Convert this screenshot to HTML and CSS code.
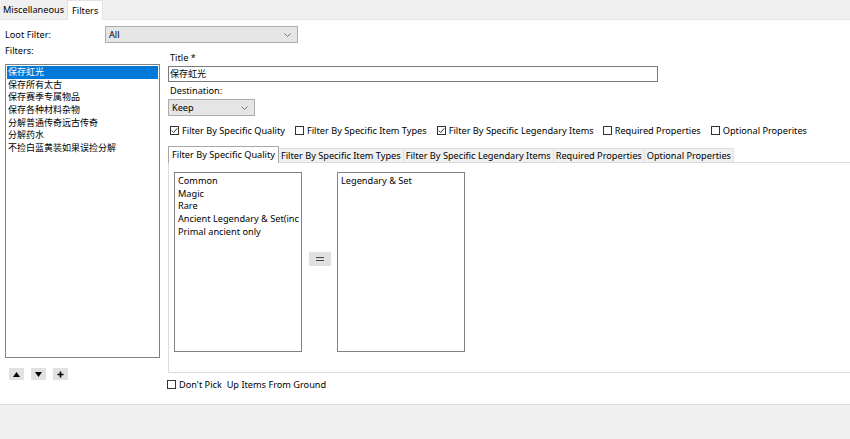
FILE: index.html
```html
<!DOCTYPE html>
<html>
<head>
<meta charset="utf-8">
<link rel="stylesheet" href="styles.css">
</head>
<body>
<div class="app">
  <div class="tabs">
    <div class="tab">Miscellaneous</div>
    <div class="tab active">Filters</div>
  </div>
  <div class="page">
    <div class="row-loot">
      <span class="lbl-loot">Loot Filter:</span>
      <div class="combo combo-all"><span>All</span><svg class="chev" width="7" height="4" viewBox="0 0 7 4"><polyline points="0.5,0.5 3.5,3.5 6.5,0.5" fill="none" stroke="#777" stroke-width="1"/></svg></div>
    </div>
    <div class="main">
      <div class="left">
        <div class="lbl">Filters:</div>
        <div class="listbox filters zh">
          <div class="item sel">保存虹光</div>
          <div class="item">保存所有太古</div>
          <div class="item">保存赛季专属物品</div>
          <div class="item">保存各种材料杂物</div>
          <div class="item">分解普通传奇远古传奇</div>
          <div class="item">分解药水</div>
          <div class="item">不捡白蓝黄装如果误捡分解</div>
        </div>
        <div class="btns">
          <div class="sbtn"><svg width="7" height="5" viewBox="0 0 7 5"><polygon points="3.5,0 7,5 0,5" fill="#000"/></svg></div>
          <div class="sbtn"><svg width="7" height="5" viewBox="0 0 7 5"><polygon points="0,0 7,0 3.5,5" fill="#000"/></svg></div>
          <div class="sbtn"><svg width="7" height="7" viewBox="0 0 7 7"><path d="M3.5 0.5V6.5M0.5 3.5H6.5" stroke="#000" stroke-width="1.6"/></svg></div>
        </div>
      </div>
      <div class="right">
        <div class="lbl">Title *</div>
        <div class="textbox zh">保存虹光</div>
        <div class="lbl lbl-dest">Destination:</div>
        <div class="combo combo-keep"><span>Keep</span><svg class="chev" width="7" height="4" viewBox="0 0 7 4"><polyline points="0.5,0.5 3.5,3.5 6.5,0.5" fill="none" stroke="#777" stroke-width="1"/></svg></div>
        <div class="checks">
          <label class="chk"><span class="box on"><svg width="7" height="7" viewBox="0 0 7 7"><polyline points="0.8,3.6 2.7,5.5 6.2,1.3" fill="none" stroke="#333" stroke-width="1"/></svg></span>Filter By Specific Quality</label>
          <label class="chk"><span class="box"></span>Filter By Specific Item Types</label>
          <label class="chk"><span class="box on"><svg width="7" height="7" viewBox="0 0 7 7"><polyline points="0.8,3.6 2.7,5.5 6.2,1.3" fill="none" stroke="#333" stroke-width="1"/></svg></span>Filter By Specific Legendary Items</label>
          <label class="chk"><span class="box"></span>Required Properties</label>
          <label class="chk"><span class="box"></span>Optional Properites</label>
        </div>
        <div class="subtabs">
          <div class="stab active">Filter By Specific Quality</div>
          <div class="stab">Filter By Specific Item Types</div>
          <div class="stab">Filter By Specific Legendary Items</div>
          <div class="stab">Required Properties</div>
          <div class="stab">Optional Properties</div>
        </div>
        <div class="panel">
          <div class="listbox qlist">
            <div class="item">Common</div>
            <div class="item">Magic</div>
            <div class="item">Rare</div>
            <div class="item">Ancient Legendary &amp; Set(incl</div>
            <div class="item">Primal ancient only</div>
          </div>
          <div class="swap"><svg width="8" height="4" viewBox="0 0 8 4"><rect x="0" y="0" width="8" height="1" fill="#444"/><rect x="0" y="3" width="8" height="1" fill="#444"/></svg></div>
          <div class="listbox qlist">
            <div class="item">Legendary &amp; Set</div>
          </div>
        </div>
        <label class="chk chk-ground"><span class="box"></span>Don't Pick&nbsp; Up Items From Ground</label>
      </div>
    </div>
  </div>
</div>
</body>
</html>
```
FILE: styles.css
```css
* { box-sizing: border-box; }
html, body { margin: 0; padding: 0; }
body {
  background: #f0f0f0;
  font-family: "Noto Sans", "Noto Sans CJK SC", sans-serif;
  font-size: 9.2px;
  color: #000;
  width: 850px;
  height: 439px;
  overflow: hidden;
}
.zh { font-size: 9px; }
.app { height: 439px; display: flex; flex-direction: column; }
.tabs { height: 19px; display: flex; align-items: flex-end; }
.tab {
  height: 17px;
  line-height: 16px;
  padding: 0 3px;
  color: #000;
}
.tab.active {
  height: 20px;
  line-height: 20px;
  background: #fff;
  border: 1px solid #e3e3e3;
  border-bottom: none;
  margin-bottom: -1px;
  position: relative;
  padding: 0 4px;
}
.page {
  height: 386px;
  background: #fff;
  border-top: 1px solid #e3e3e3;
  border-bottom: 1px solid #dcdcdc;
  padding: 6px 0 0 5px;
}
.row-loot { display: flex; align-items: center; height: 17px; }
.lbl-loot { width: 100px; }
.combo {
  display: flex;
  align-items: center;
  justify-content: space-between;
  background: #e5e5e5;
  border: 1px solid #adadad;
  height: 17px;
  padding: 0 6px 0 3px;
}
.combo-all { width: 193px; }
.combo-keep { width: 87px; margin-top: 2px; }
.main { display: flex; margin-top: 2px; }
.left { width: 155px; flex-shrink: 0; }
.lbl { line-height: 12px; height: 12px; }
.listbox {
  background: #fff;
  border: 1px solid #828282;
}
.filters { margin-top: 7px; height: 294px; padding: 1px 1px 0 1px; }
.item { line-height: 12.7px; height: 12.7px; padding-left: 1px; white-space: nowrap; overflow: hidden; }
.item.sel { background: #0078d7; color: #fff; }
.btns { display: flex; gap: 7px; margin-top: 10px; padding-left: 4px; }
.sbtn {
  width: 15px; height: 12px;
  background: #e1e1e1;
  border: 1px solid #e1e1e1;
  display: flex; align-items: center; justify-content: center;
}
.right { margin-left: 8px; padding-top: 7px; flex: 1; min-width: 0; }
.textbox {
  margin-top: 2px;
  width: 490px;
  height: 16px;
  border: 1px solid #7a7a7a;
  line-height: 14px;
  padding-left: 1px;
}
.lbl-dest { margin-top: 3px; padding-left: 2px; }
.right > .lbl:first-child { padding-left: 2px; }
.checks { display: flex; margin-top: 8px; height: 12px; align-items: center; padding-left: 2px; }
.chk { display: flex; align-items: center; margin-right: 10px; white-space: nowrap; }
.checks .chk:nth-child(3) { margin-right: 9px; }
.box {
  width: 9px; height: 9px;
  border: 1px solid #333;
  margin-right: 3px;
  display: flex; align-items: center; justify-content: center;
  background: #fff;
}
.subtabs { display: flex; margin-top: 10px; height: 16px; align-items: flex-end; }
.stab {
  height: 14px;
  line-height: 13px;
  padding: 0 2px;
  background: #f0f0f0;
  border: 1px solid #e0e0e0;
  border-bottom: none;
  margin-right: -1px;
  white-space: nowrap;
}
.stab.active {
  height: 17px;
  line-height: 15px;
  background: #fff;
  border: 1px solid #a8a8a8;
  border-bottom: none;
  margin-bottom: -1px;
  position: relative;
  padding: 0 3px;
}
.panel {
  height: 211px;
  border: 1px solid #dcdcdc;
  border-right: none;
  display: flex;
  align-items: center;
  padding-left: 5px;
}
.qlist { width: 128px; height: 180px; align-self: flex-start; margin-top: 9px; padding: 2px 2px; }
.swap {
  width: 22px; height: 14px;
  margin: -18px 6px 0 7px;
  background: #e1e1e1;
  border: 1px solid #e1e1e1;
  display: flex; align-items: center; justify-content: center;
}
.chk-ground { margin-top: 5px; margin-left: -1px; height: 12px; }
```
